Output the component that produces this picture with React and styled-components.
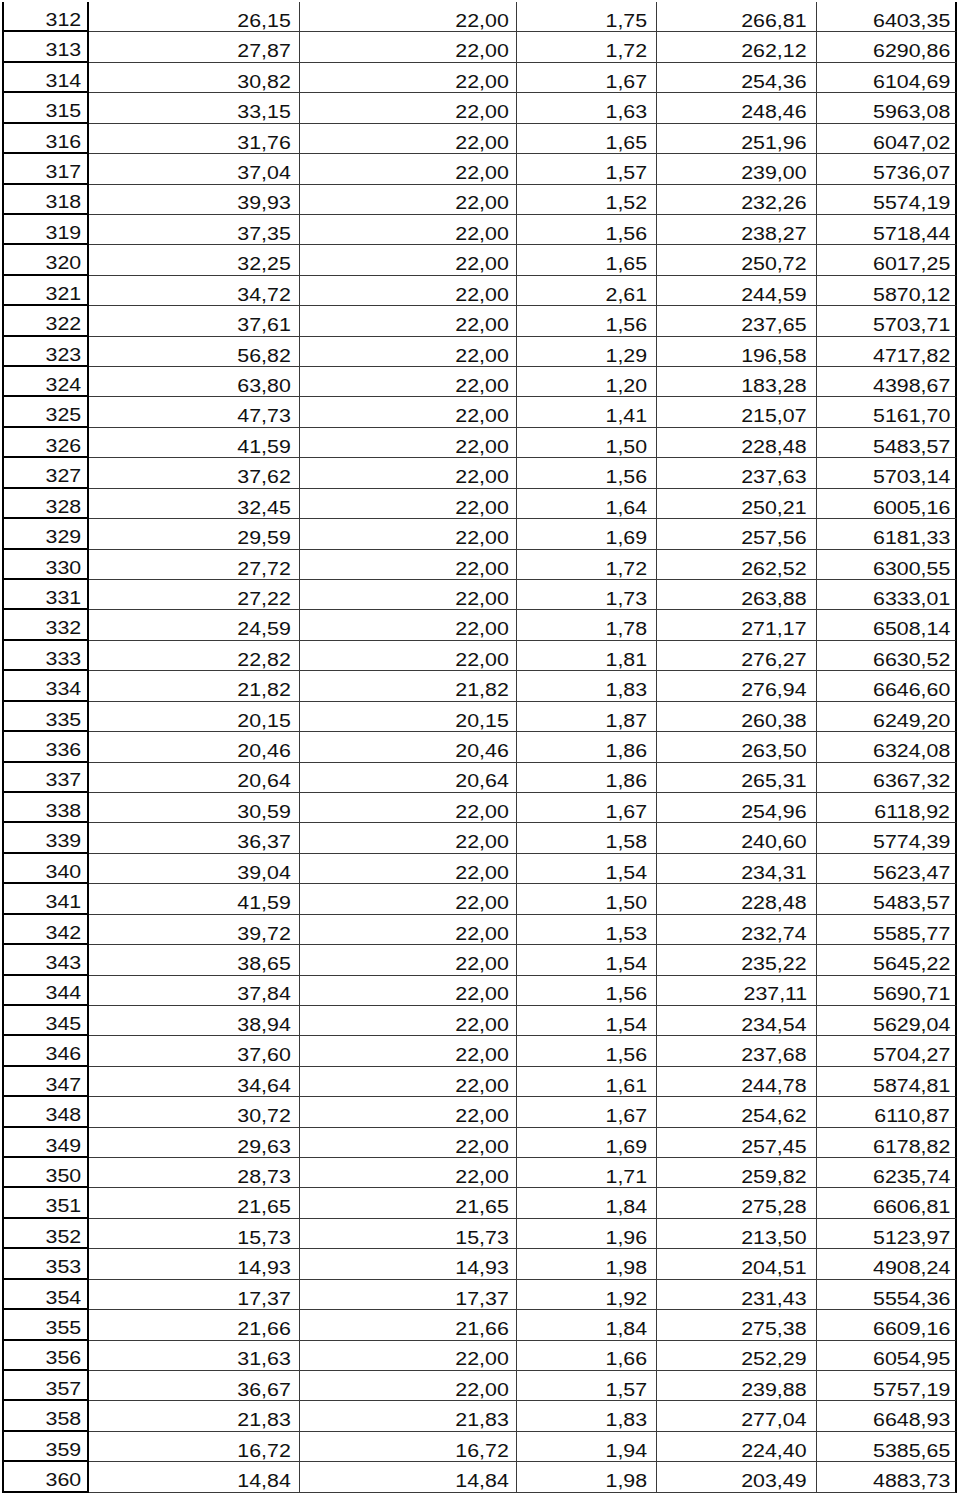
import React from "react";
import styled, { createGlobalStyle } from "styled-components";

const GlobalStyle = createGlobalStyle`
  html, body {
    margin: 0;
    padding: 0;
    background: #ffffff;
  }
  body {
    font-family: "Liberation Sans", Arial, sans-serif;
    color: #111;
  }
`;

const rows = `312 26,15 22,00 1,75 266,81 6403,35
313 27,87 22,00 1,72 262,12 6290,86
314 30,82 22,00 1,67 254,36 6104,69
315 33,15 22,00 1,63 248,46 5963,08
316 31,76 22,00 1,65 251,96 6047,02
317 37,04 22,00 1,57 239,00 5736,07
318 39,93 22,00 1,52 232,26 5574,19
319 37,35 22,00 1,56 238,27 5718,44
320 32,25 22,00 1,65 250,72 6017,25
321 34,72 22,00 2,61 244,59 5870,12
322 37,61 22,00 1,56 237,65 5703,71
323 56,82 22,00 1,29 196,58 4717,82
324 63,80 22,00 1,20 183,28 4398,67
325 47,73 22,00 1,41 215,07 5161,70
326 41,59 22,00 1,50 228,48 5483,57
327 37,62 22,00 1,56 237,63 5703,14
328 32,45 22,00 1,64 250,21 6005,16
329 29,59 22,00 1,69 257,56 6181,33
330 27,72 22,00 1,72 262,52 6300,55
331 27,22 22,00 1,73 263,88 6333,01
332 24,59 22,00 1,78 271,17 6508,14
333 22,82 22,00 1,81 276,27 6630,52
334 21,82 21,82 1,83 276,94 6646,60
335 20,15 20,15 1,87 260,38 6249,20
336 20,46 20,46 1,86 263,50 6324,08
337 20,64 20,64 1,86 265,31 6367,32
338 30,59 22,00 1,67 254,96 6118,92
339 36,37 22,00 1,58 240,60 5774,39
340 39,04 22,00 1,54 234,31 5623,47
341 41,59 22,00 1,50 228,48 5483,57
342 39,72 22,00 1,53 232,74 5585,77
343 38,65 22,00 1,54 235,22 5645,22
344 37,84 22,00 1,56 237,11 5690,71
345 38,94 22,00 1,54 234,54 5629,04
346 37,60 22,00 1,56 237,68 5704,27
347 34,64 22,00 1,61 244,78 5874,81
348 30,72 22,00 1,67 254,62 6110,87
349 29,63 22,00 1,69 257,45 6178,82
350 28,73 22,00 1,71 259,82 6235,74
351 21,65 21,65 1,84 275,28 6606,81
352 15,73 15,73 1,96 213,50 5123,97
353 14,93 14,93 1,98 204,51 4908,24
354 17,37 17,37 1,92 231,43 5554,36
355 21,66 21,66 1,84 275,38 6609,16
356 31,63 22,00 1,66 252,29 6054,95
357 36,67 22,00 1,57 239,88 5757,19
358 21,83 21,83 1,83 277,04 6648,93
359 16,72 16,72 1,94 224,40 5385,65
360 14,84 14,84 1,98 203,49 4883,73`
  .split("\n")
  .map((line) => line.trim().split(" "));

// right padding per column, read off the scan
const colPad = [6, 8, 7, 9, 9, 5];

// Spreadsheet grid: first column has heavy borders, rest thin
const Sheet = styled.div`
  display: grid;
  grid-template-columns: 87px 211px 217px 140px 160px 140px;
  grid-auto-rows: 30.43px;
  margin: 2px 0 0 2px;
  width: 955px;
`;

const Cell = styled.div`
  box-sizing: border-box;
  display: flex;
  align-items: flex-end;
  justify-content: flex-end;
  padding: 0 ${(p) => p.$pad}px 1px 0;
  font-size: 17.5px;
  line-height: 1;
  white-space: nowrap;
  border-bottom: ${(p) => (p.$first ? "2px solid #000" : "1px solid #3a3a3a")};
  border-right: ${(p) =>
    p.$first || p.$last ? "2px solid #000" : "1px solid #3a3a3a"};
  border-left: ${(p) => (p.$first ? "2px solid #000" : "none")};
`;

// the scanned print is horizontally stretched
const Num = styled.span`
  display: inline-block;
  transform: scaleX(1.22);
  transform-origin: right bottom;
`;

export default function App() {
  return (
    <>
      <GlobalStyle />
      <Sheet>
        {rows.map((row) =>
          row.map((val, i) => (
            <Cell
              key={row[0] + "-" + i}
              $first={i === 0}
              $last={i === row.length - 1}
              $pad={colPad[i]}
            >
              <Num>{val}</Num>
            </Cell>
          ))
        )}
      </Sheet>
    </>
  );
}
